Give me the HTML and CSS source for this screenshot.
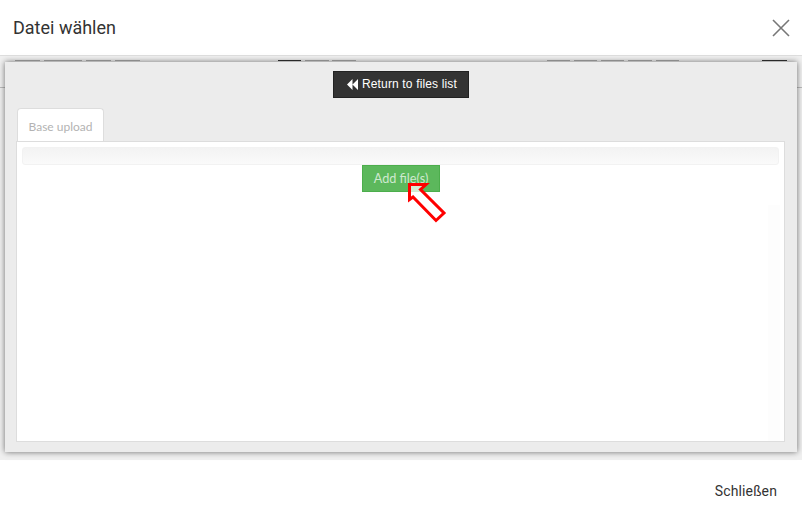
FILE: index.html
```html
<!DOCTYPE html>
<html lang="de">
<head>
  <meta charset="UTF-8" />
  <title>Datei wählen</title>
  <link rel="stylesheet" href="styles.css">
</head>
<body>
  <div class="modal">
    <div class="modal-header">
      <h1>Datei wählen</h1>
      <svg class="close" width="18" height="18" viewBox="0 0 18 18">
        <path d="M1 1L17 17M17 1L1 17" stroke="#777" stroke-width="1.6" fill="none" />
      </svg>
    </div>

    <div class="modal-body">
      <div class="page-behind">
        <span class="mark m1"></span><span class="mark m2"></span><span class="mark m3"></span><span class="mark m4"></span>
        <span class="mark dark m5"></span><span class="mark m6"></span><span class="mark m7"></span>
        <span class="mark m8"></span><span class="mark m9"></span><span class="mark m10"></span><span class="mark m11"></span><span class="mark m12"></span>
        <span class="mark dark m13"></span>
        <span class="rule rule-left"></span><span class="rule rule-right"></span>
      </div>

      <div class="window">
        <div class="return-row">
          <button class="btn-return">
            <svg width="11" height="11" viewBox="0 0 11 11"><path d="M5.5 0V11L0 5.5ZM11 0V11L5.5 5.5Z" fill="#fff" /></svg>
            Return to files list
          </button>
        </div>
        <div class="tabs">
          <div class="tab">Base upload</div>
        </div>
        <div class="tab-content">
          <div class="toolbar"></div>
          <div class="add-row">
            <button class="btn-add">Add file(s)</button>
          </div>
          <div class="patch"></div>
        </div>
      </div>

      <svg class="arrow" width="42" height="42" viewBox="0 0 42 42">
        <path d="M3.5 2.5H20L14.5 7.5L38 31L30 38.5L7 15L3.5 17.5Z" fill="#fff" fill-opacity="0.75" stroke="#f00" stroke-width="3" />
      </svg>
    </div>

    <div class="modal-footer">
      <button class="btn-close">Schließen</button>
    </div>
  </div>
</body>
</html>
```

FILE: styles.css
```css
html, body {
  margin: 0;
  height: 522px;
  overflow: hidden;
  background: #fff;
}
.modal {
  font-family: Roboto, Arial, sans-serif;
  color: #333;
}
.modal-header {
  height: 55px;
  display: flex;
  align-items: center;
  justify-content: space-between;
  padding: 0 12px 0 13px;
  border-bottom: 1px solid #dedede;
}
.modal-header h1 {
  margin: 0 0 1px;
  font-size: 18px;
  font-weight: 400;
  color: #333;
}
.close {
  display: block;
}
.modal-body {
  position: relative;
  height: 404px;
  padding: 6px 5px 8px;
  box-sizing: border-box;
  background: #f0f0f0;
}
.page-behind {
  position: absolute;
  inset: 0;
}
.mark {
  position: absolute;
  top: 4px;
  height: 1px;
  background: #aaa;
}
.mark.dark {
  background: #333;
}
.m1 { left: 15px; width: 25px; }
.m2 { left: 44px; width: 38px; }
.m3 { left: 86px; width: 25px; }
.m4 { left: 115px; width: 25px; }
.m5 { left: 278px; width: 23px; }
.m6 { left: 305px; width: 24px; }
.m7 { left: 332px; width: 24px; }
.m8 { left: 547px; width: 23px; }
.m9 { left: 574px; width: 23px; }
.m10 { left: 601px; width: 23px; }
.m11 { left: 628px; width: 24px; }
.m12 { left: 656px; width: 23px; }
.m13 { left: 762px; width: 25px; }
.rule {
  position: absolute;
  top: 31px;
  width: 5px;
  height: 1px;
  background: #bbb;
}
.rule-left { left: 0; }
.rule-right { right: 0; }
.window {
  position: relative;
  height: 390px;
  box-sizing: border-box;
  background: #ececec;
  padding: 9px 12px 10px 11px;
  box-shadow: 0 0 6px rgba(0, 0, 0, 0.55);
}
.return-row {
  display: flex;
  justify-content: center;
  padding-left: 1px;
}
.btn-return {
  width: 136px;
  height: 27px;
  display: flex;
  align-items: center;
  justify-content: center;
  gap: 4px;
  padding: 0 0 2px 2px;
  border: 1px solid #222;
  background: #333;
  color: #fff;
  font-family: "Liberation Sans", Arial, sans-serif;
  font-size: 12px;
  letter-spacing: 0.15px;
}
.btn-return svg {
  margin-top: 2px;
}
.tabs {
  display: flex;
  margin-top: 10px;
  padding-left: 1px;
}
.tab {
  width: 87px;
  height: 34px;
  box-sizing: border-box;
  margin-bottom: -1px;
  position: relative;
  background: #fff;
  border: 1px solid #ddd;
  border-bottom: 0;
  border-radius: 4px 4px 0 0;
  color: #b3b3b3;
  font-family: Lato, Arial, sans-serif;
  font-size: 12px;
  line-height: 35px;
  text-align: center;
}
.tab-content {
  position: relative;
  height: 301px;
  box-sizing: border-box;
  background: #fff;
  border: 1px solid #ddd;
  padding: 5px;
}
.toolbar {
  height: 18px;
  box-sizing: border-box;
  background: linear-gradient(#f3f3f3, #fafafa);
  border: 1px solid #f2f2f2;
  border-radius: 3px;
}
.add-row {
  display: flex;
  justify-content: center;
  padding-left: 1px;
}
.btn-add {
  width: 78px;
  height: 27px;
  padding: 0 0 1px;
  background: #5cb85c;
  border: 1px solid #4cae4c;
  color: #cfe9cf;
  font-family: Lato, Arial, sans-serif;
  font-size: 12.7px;
}
.patch {
  position: absolute;
  top: 63px;
  right: 4px;
  bottom: 0;
  width: 12px;
  background: #fdfdfd;
}
.arrow {
  position: absolute;
  left: 406px;
  top: 126px;
}
.modal-footer {
  height: 62px;
  display: flex;
  justify-content: flex-end;
  align-items: center;
}
.btn-close {
  margin-right: 25px;
  padding: 0;
  background: none;
  border: 0;
  color: #333;
  font-family: Roboto, Arial, sans-serif;
  font-size: 14px;
  letter-spacing: 0.12px;
}
```
